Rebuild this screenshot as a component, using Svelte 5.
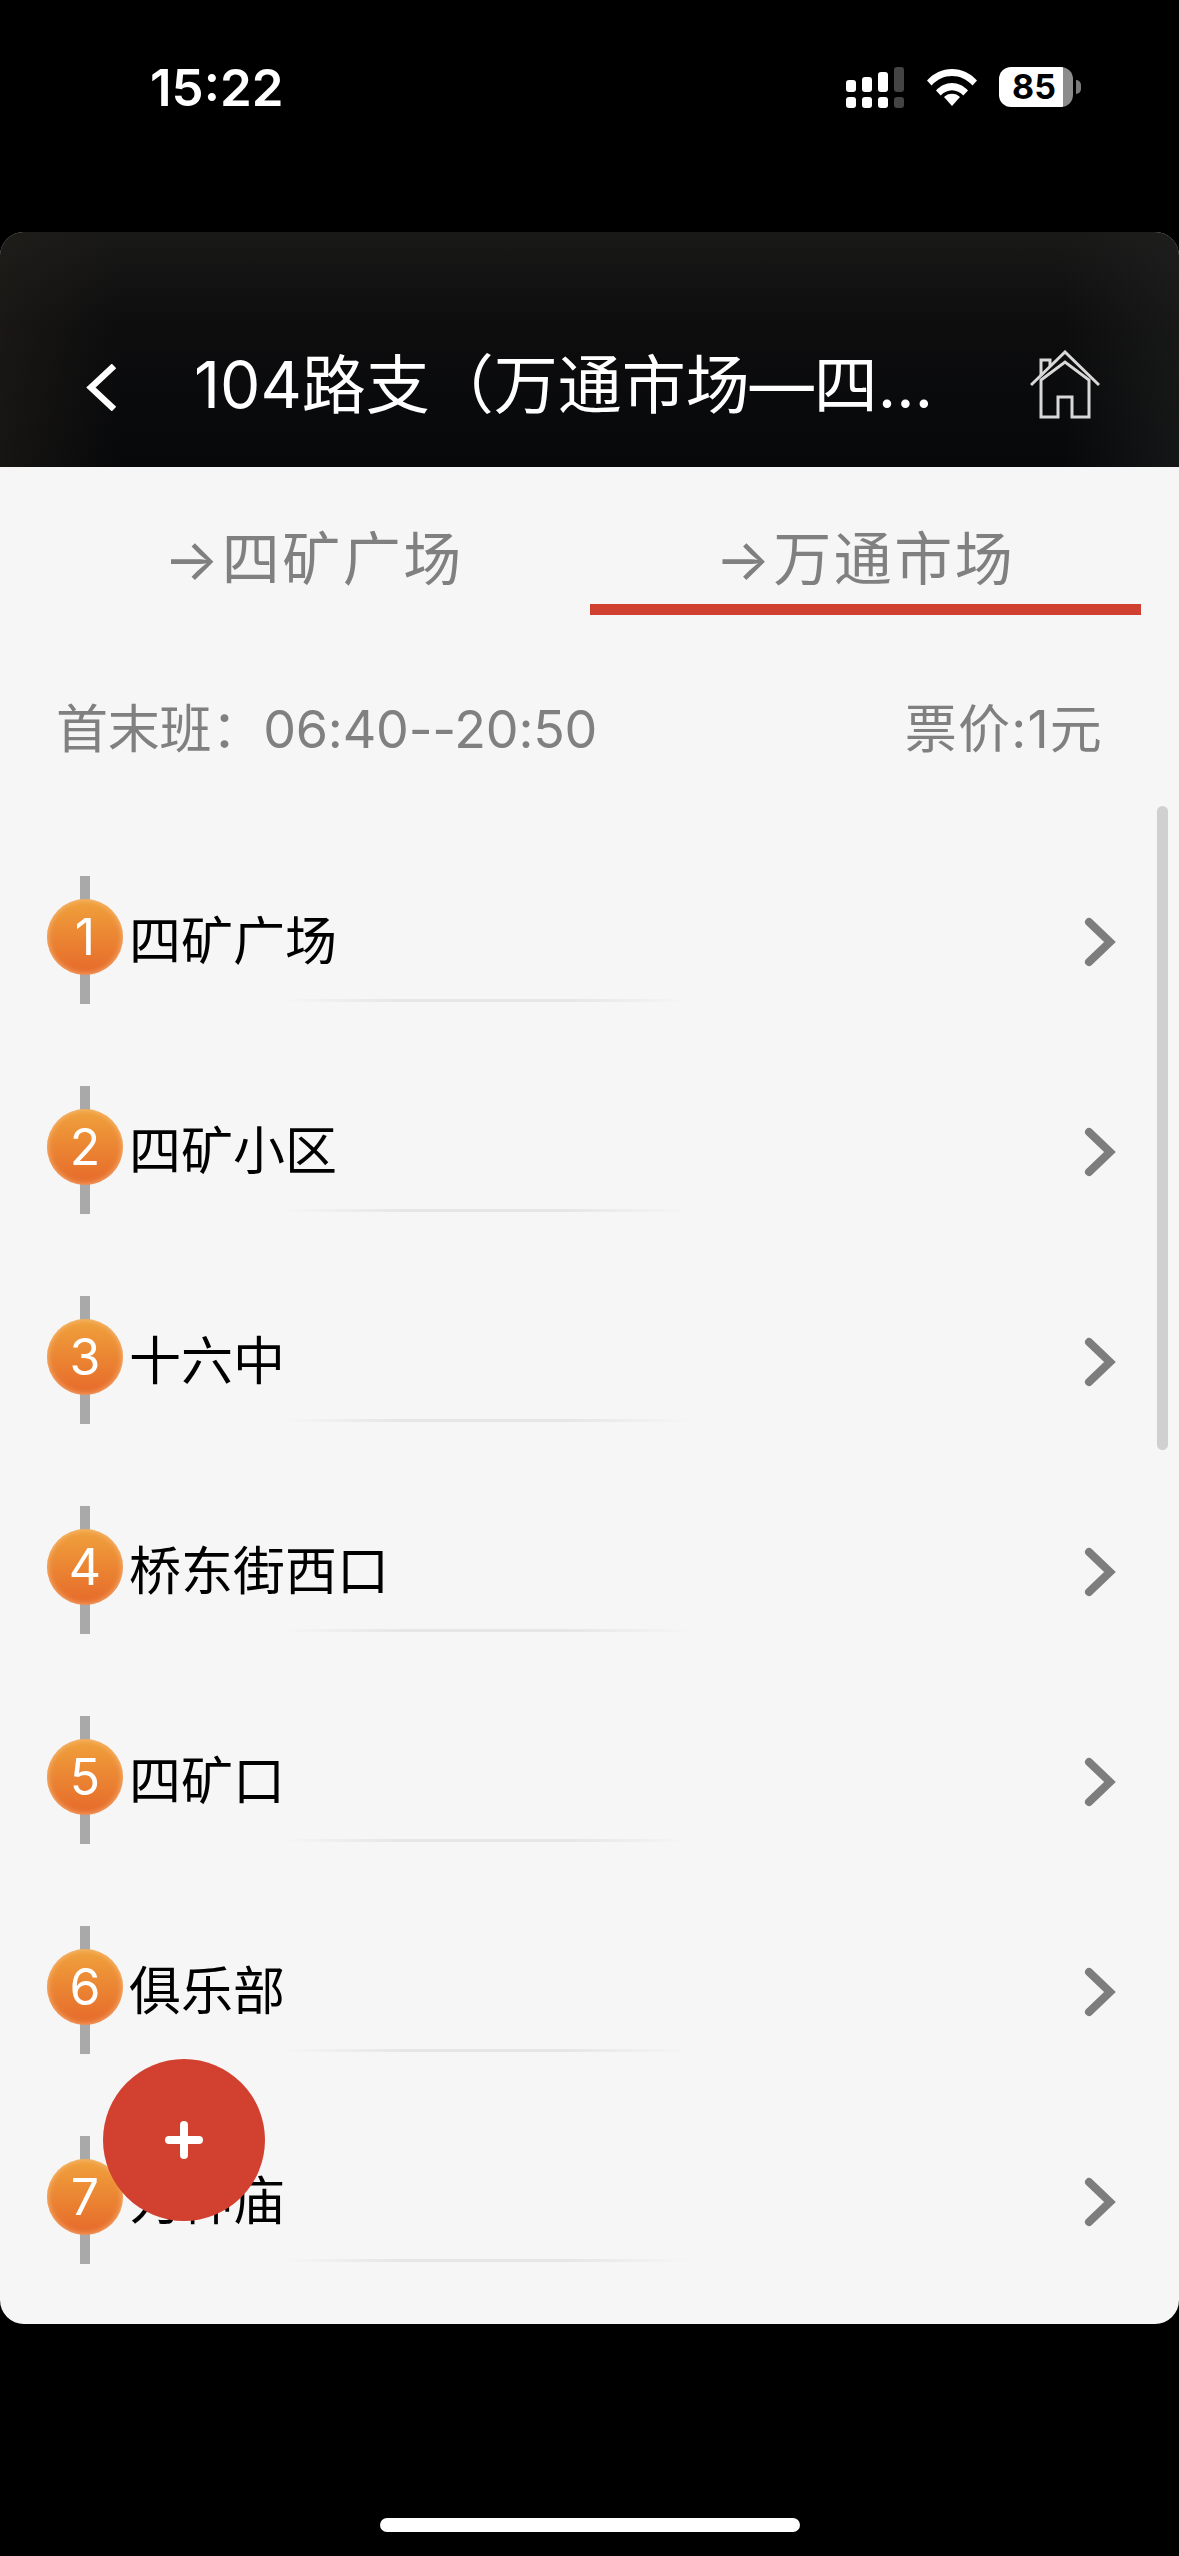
<script>
    const stops = ['四矿广场', '四矿小区', '十六中', '桥东街西口', '四矿口', '俱乐部', '为神庙'];
</script>

<div class="page">
    <div class="status">
        <span class="time">15:22</span>
        <svg class="signal" width="58" height="41" viewBox="0 0 58 41" fill="#fff">
            <rect x="0" y="13" width="10" height="12" rx="3" />
            <rect x="16" y="10" width="10" height="15" rx="3" />
            <rect x="32" y="5" width="10" height="20" rx="3" />
            <rect x="48" y="0" width="10" height="25" rx="3" fill="#444" />
            <rect x="0" y="30" width="10" height="11" rx="3" />
            <rect x="16" y="30" width="10" height="11" rx="3" />
            <rect x="32" y="30" width="10" height="11" rx="3" />
            <rect x="48" y="30" width="10" height="11" rx="3" fill="#444" />
        </svg>
        <svg class="wifi" width="50" height="37" viewBox="0 0 50 37" fill="#fff">
            <path d="M0 11.5C6.5 4.2 15.4 0 25 0s18.500 4.200 25 11.500l-4.500 5C39.900 10.300 32.700 7 25 7S10.100 10.300 4.500 16.500z" />
            <path d="M9 21.500C13.200 16.900 18.900 14 25 14s11.800 2.900 16 7.500l-4.700 5C33.300 23.300 29.300 21.200 25 21.200s-8.300 2.100-11.300 5.300z" />
            <path d="M25 37l-8-9c2.100-2.100 4.900-3.300 8-3.300s5.900 1.200 8 3.300z" />
        </svg>
        <div class="battery">
            <span class="level">85</span>
            <span class="nub"></span>
        </div>
    </div>

    <div class="card">
        <header>
            <svg class="back" width="31" height="47" viewBox="0 0 31 47" fill="none" stroke="#fff" stroke-width="6.500">
                <path d="M28 2L5 23.500 28 45" />
            </svg>
            <h1>104路支（万通市场—四矿广场）</h1>
            <svg class="home" width="70" height="70" viewBox="0 0 70 70" fill="none" stroke="#d8d8d8" stroke-width="3">
                <path d="M1 35L35 2l34 33" />
                <path d="M11 26V10h9v7" />
                <path d="M11 30L35 12l24 18V67H42V47H28v20H11z" stroke-linejoin="miter" />
            </svg>
        </header>

        <div class="tabs">
            <div class="tab">→四矿广场</div>
            <div class="tab active">→万通市场</div>
        </div>

        <div class="info">
            <span>首末班：06:40--20:50</span>
            <span class="fare">票价:1元</span>
        </div>

        <div class="list">
            {#each stops as name, i}
                <div class="row">
                    <div class="mark">
                        <span class="bubble">{i + 1}</span>
                    </div>
                    <span class="name">{name}</span>
                    <svg class="more" width="32" height="50" viewBox="0 0 32 50" fill="none" stroke="#7d7d7d" stroke-width="8" stroke-linecap="round">
                        <path d="M5 5l21 20L5 45" />
                    </svg>
                    <span class="divider"></span>
                </div>
            {/each}
        </div>

        <div class="scrollbar"></div>
        <button class="fab" aria-label="add">
            <svg width="38" height="38" viewBox="0 0 38 38" stroke="#fff" stroke-width="8" stroke-linecap="round">
                <path d="M19 4v30M4 19h30" />
            </svg>
        </button>
    </div>

    <div class="bottom">
        <div class="indicator"></div>
    </div>
</div>

<style>
    :global(body) {
        margin: 0;
        background: #000;
    }

    .page {
        width: 1179px;
        height: 2556px;
        background: #000;
        display: flex;
        flex-direction: column;
        font-family: "Inter", "Noto Sans CJK SC", sans-serif;
    }

    .status {
        height: 232px;
        box-sizing: border-box;
        padding: 67px 98px 0 150px;
        display: flex;
        align-items: flex-start;
        color: #fff;
    }

    .time {
        font-size: 51px;
        font-weight: 600;
        line-height: 42px;
        margin-right: auto;
    }

    .wifi {
        margin: 2px 22px 0 23px;
    }

    .battery {
        position: relative;
        width: 74px;
        height: 40px;
        border-radius: 12px;
        background: linear-gradient(90deg, #fff 0 64px, #8c8c8c 64px);
        margin-right: 8px;
        color: #000;
        font-size: 34px;
        font-weight: 700;
        line-height: 40px;
    }

    .level {
        position: absolute;
        left: 13px;
        top: 0;
    }

    .nub {
        position: absolute;
        right: -8px;
        top: 13px;
        width: 5px;
        height: 14px;
        border-radius: 0 7px 7px 0;
        background: #7a7a7a;
    }

    .card {
        position: relative;
        height: 2092px;
        border-radius: 24px;
        overflow: hidden;
        background: #f6f6f7;
    }

    header {
        height: 235px;
        box-sizing: border-box;
        padding: 76px 0 0 86px;
        display: flex;
        align-items: center;
        color: #fff;
        background:
            linear-gradient(90deg, rgba(36, 32, 26, 0.55), transparent 10%, transparent 90%, rgba(34, 35, 34, 0.5)),
            linear-gradient(180deg, #191918, #0d0d0e 40%, #07080a);
    }

    .back {
        flex: none;
        margin-right: 77px;
    }

    h1 {
        width: 750px;
        flex: none;
        margin: -6px 0 0;
        font-size: 64px;
        font-weight: 400;
        line-height: 90px;
        white-space: nowrap;
        overflow: hidden;
        text-overflow: ellipsis;
    }

    .home {
        flex: none;
        margin: -6px 0 0 86px;
    }

    .tabs {
        display: flex;
        padding: 0 38px;
    }

    .tab {
        flex: 1;
        height: 148px;
        box-sizing: border-box;
        padding-top: 52px;
        font-size: 58px;
        letter-spacing: 2.500px;
        line-height: 80px;
        text-align: center;
        color: #808080;
    }

    .active {
        border-bottom: 11px solid #d04030;
    }

    .info {
        display: flex;
        justify-content: space-between;
        height: 120px;
        margin: 55px 0 45px;
        padding: 0 76px 0 56px;
        font-size: 52px;
        letter-spacing: -0.2px;
        line-height: 120px;
        color: #808080;
    }

    .fare {
        letter-spacing: 1.200px;
    }

    .row {
        position: relative;
        height: 210px;
        display: flex;
        align-items: center;
        padding-left: 80px;
    }

    .mark {
        position: relative;
        flex: none;
        width: 10px;
        height: 128px;
        background: #a9a9a9;
    }

    .bubble {
        position: absolute;
        left: -33px;
        top: 23px;
        width: 76px;
        height: 76px;
        border-radius: 50%;
        background: linear-gradient(180deg, #f0a23c, #e6692a);
        box-shadow: inset 0 0 6px rgba(250, 195, 140, 0.95);
        color: #fff;
        font-size: 50px;
        font-weight: 400;
        line-height: 76px;
        text-align: center;
    }

    .name {
        flex: 1;
        margin: -5px 0 0 39px;
        font-size: 52px;
        color: #000;
    }

    .more {
        flex: none;
        margin: 4px 63px 0 0;
    }

    .divider {
        position: absolute;
        left: 280px;
        top: 164px;
        width: 410px;
        height: 3px;
        background: linear-gradient(90deg, transparent, #e6e6e6 30%, #e6e6e6 70%, transparent);
    }

    .scrollbar {
        position: absolute;
        left: 1157px;
        top: 574px;
        width: 11px;
        height: 644px;
        border-radius: 6px;
        background: #d0d0d0;
    }

    .fab {
        position: absolute;
        left: 103px;
        top: 1827px;
        width: 162px;
        height: 162px;
        border: 0;
        padding: 0;
        border-radius: 50%;
        background: #d2412f;
        display: flex;
        align-items: center;
        justify-content: center;
    }

    .bottom {
        flex: 1;
        display: flex;
        justify-content: center;
        align-items: flex-end;
        padding-bottom: 24px;
    }

    .indicator {
        width: 420px;
        height: 14px;
        border-radius: 7px;
        background: #fff;
    }
</style>
